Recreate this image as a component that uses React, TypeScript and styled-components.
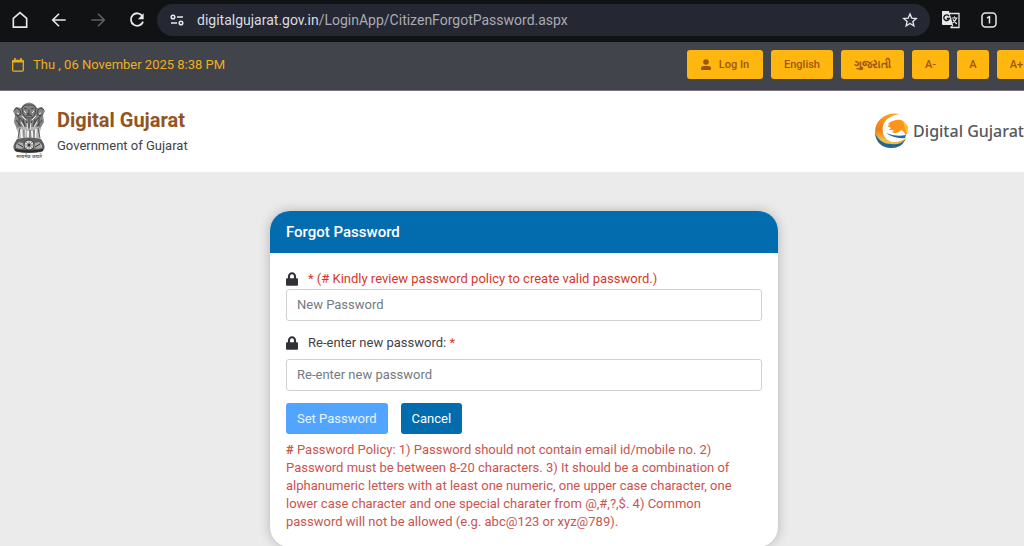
import React from "react";
import styled, { createGlobalStyle } from "styled-components";

const GlobalStyle = createGlobalStyle`
  *, *::before, *::after { box-sizing: border-box; }
  body {
    margin: 0;
    background: #ebebeb;
    color: #3f4247;
    font: 13px/18px Roboto, "Noto Sans", "Liberation Sans", sans-serif;
    overflow: hidden;
  }
  button, input { font: inherit; }
`;

const BrowserBar = styled.header`
  display: flex;
  align-items: center;
  height: 42px;
  padding: 0 23px 3px 8px;
  background: #111214;
  color: #e6e7ea;
`;

const NavGroup = styled.nav`
  display: flex;
  gap: 15px;
  margin-right: 8px;
`;

const IconButton = styled.button<{ $dim?: boolean }>`
  display: flex;
  align-items: center;
  justify-content: center;
  width: 24px;
  height: 24px;
  padding: 0;
  border: 0;
  background: none;
  color: ${(p) => (p.$dim ? "#5f6064" : "inherit")};
`;

const AddressBar = styled.div`
  display: flex;
  flex: 1;
  align-items: center;
  height: 32px;
  padding: 0 8px;
  border-radius: 16px;
  background: #252833;
`;

const AddressText = styled.div`
  flex: 1;
  margin-left: 8px;
  overflow: hidden;
  color: #a9abb4;
  font-size: 14px;
  white-space: nowrap;
`;

const Host = styled.span`
  color: #d9dbe1;
`;

const BrowserActions = styled.div`
  display: flex;
  gap: 15px;
  margin-left: 8px;
`;

const Site = styled.div`
  width: calc(100% + 24px);
`;

const TopBar = styled.div`
  display: flex;
  align-items: center;
  justify-content: space-between;
  height: 49px;
  padding: 0 12px 3px 12px;
  border-bottom: 1px solid #77787d;
  background: #42444b;
`;

const DateLine = styled.div`
  display: flex;
  align-items: center;
  gap: 9px;
  color: #efae1c;
`;

const Tools = styled.div`
  display: flex;
  gap: 8px;
`;

const ToolButton = styled.button<{ $width: number }>`
  display: flex;
  align-items: center;
  justify-content: center;
  gap: 8px;
  width: ${(p) => p.$width}px;
  height: 29px;
  padding: 0;
  border: 0;
  border-radius: 3px;
  background: #ffb70f;
  color: #9a560f;
  font-size: 11px;
  font-weight: 500;
  &:lang(gu) { font-weight: 700; }
`;

const Masthead = styled.div`
  display: flex;
  align-items: center;
  justify-content: space-between;
  height: 81px;
  padding: 0 24px 2px 12px;
  background: #fff;
`;

const Brand = styled.div`
  display: flex;
  align-items: center;
  gap: 11px;
`;

const BrandName = styled.h1`
  margin: 0 0 4px;
  color: #93551f;
  font-size: 20px;
  font-weight: 700;
  line-height: 26px;
`;

const BrandOwner = styled.p`
  margin: 0;
`;

const PortalLogo = styled.a`
  display: flex;
  align-items: center;
  gap: 4px;
  color: #55585e;
  font: 500 16px/24px "Noto Sans", sans-serif;
  text-decoration: none;
  white-space: nowrap;
`;

const Main = styled.main`
  display: flex;
  justify-content: center;
  padding: 39px 24px;
`;

const Card = styled.section`
  width: 100%;
  max-width: 508px;
  overflow: hidden;
  border-radius: 20px;
  background: #fff;
  box-shadow: 0 0 12px rgba(0, 0, 0, 0.24);
`;

const CardTitle = styled.h2`
  margin: 0;
  padding: 12px 16px;
  background: #036cae;
  color: #fff;
  font-size: 15px;
  font-weight: 500;
  line-height: 18px;
`;

const Form = styled.form`
  padding: 16px;
`;

const Label = styled.label<{ $spaced?: boolean }>`
  display: flex;
  align-items: center;
  gap: 10px;
  height: 20px;
  margin-bottom: ${(p) => (p.$spaced ? "6px" : "0")};
`;

const Required = styled.span`
  color: #d23a2b;
`;

const Field = styled.input`
  display: block;
  width: 100%;
  height: 32px;
  margin-bottom: 12px;
  padding: 0 10px 2px;
  border: 1px solid #ced2d7;
  border-radius: 3px;
  background: #fff;
  color: #3f4247;
  &::placeholder { color: #747a81; opacity: 1; }
`;

const Actions = styled.div`
  display: flex;
  gap: 13px;
  margin-bottom: 7px;
`;

const ActionButton = styled.button<{ $soft?: boolean }>`
  height: 31px;
  padding: 0 11px;
  border: 0;
  border-radius: 3px;
  background: ${(p) => (p.$soft ? "#51a4ff" : "#036cae")};
  color: ${(p) => (p.$soft ? "#e9f4ff" : "#fff")};
`;

const Policy = styled.p`
  margin: 0;
  padding-right: 16px;
  color: #c95450;
`;

const Lock = () => (
  <svg width="12" height="14" viewBox="0 0 448 512" fill="#303236" aria-hidden="true">
    <path d="M400 224h-24v-72C376 68 308 0 224 0S72 68 72 152v72H48c-27 0-48 21-48 48v192c0 27 21 48 48 48h352c27 0 48-21 48-48V272c0-27-21-48-48-48zm-104 0H152v-72c0-40 32-72 72-72s72 32 72 72v72z" />
  </svg>
);

const stroke = { fill: "none", stroke: "currentColor", strokeWidth: 2 } as const;

const Emblem = () => (
  <svg width="34" height="58" viewBox="0 0 34 58" role="img" aria-label="State Emblem of India">
    <path d="M11 3q6-5 12 0l2 3 5-1 3 4-2 4 1 7-4 7-4 2-4 3h-7l-4-3-4-2-3-7 1-7-2-4 3-4 5 1z" fill="#858585" />
    <path d="M4 26l6-1 14 0 5 1-2 7 2 6H5l2-6z" fill="#b5b5b5" />
    <g fill="none" stroke="#444" strokeWidth="1">
      <path d="M2 8l3-2 3 2 1 4-3 2-3-2M32 8l-3-2-3 2-1 4 3 2 3-2" />
      <path d="M10 6l3-3h8l3 3-1 6-3 4h-6l-3-4zM12 6l3 1M22 6l-3 1M17 7v4l-2 1h4M14 14q3-2 6 0" />
      <path d="M5 14l4 3 3 5M29 14l-4 3-3 5M4 18l5 6M30 18l-5 6M11 17l2 8M23 17l-2 8M14 19l3 8 3-8M17 17v10M7 16v8M27 16v8" />
    </g>
    <g stroke="#eee" strokeWidth="1" fill="none">
      <path d="M12 9l2 2M22 9l-2 2M5 11l2 1M29 11l-2 1M10 14l4 4M24 14l-4 4M9 20l3 5M25 20l-3 5M15 21l1 6M19 21l-1 6" />
      <path d="M9 27l1 10M13 28l-1 9M16 29v9M20 29l1 9M24 27l-1 10" strokeWidth="2" />
    </g>
    <path d="M8 26l-2 10M12 28v9M18 28v9M22 28v9M26 26l2 10" stroke="#555" strokeWidth="1" />
    <path d="M5 37q12-3 24 0l3 5q2 6-3 8-12 2-24 0-5-2-3-8z" fill="#606060" />
    <path d="M3 48q14 3 28 0" fill="none" stroke="#2c2c2c" strokeWidth="2" />
    <path d="M4 43l3-3 4 1 2 4-4 2-5-1zM30 43l-3-3-4 1-2 4 4 2 5-1z" fill="#aaa" />
    <path d="M6 42l5 3M28 42l-5 3" stroke="#333" />
    <circle cx="17" cy="43" r="5" fill="#ddd" stroke="#333" />
    <path d="M13 43h8M17 39v8M14 40l6 6M20 40l-6 6" stroke="#666" strokeWidth=".7" />
    <circle cx="17" cy="43" r="1.5" fill="#333" />
    <text x="17" y="56" textAnchor="middle" fontFamily="Noto Sans" fontSize="5" fontWeight="600" fill="#555">सत्यमेव जयते</text>
  </svg>
);

const LionMark = () => (
  <svg width="35" height="38" viewBox="0 0 35 38" aria-hidden="true">
    <defs>
      <linearGradient id="ring" x1=".6" y1="0" x2=".4" y2="1">
        <stop offset="0" stopColor="#ffa51f" />
        <stop offset=".55" stopColor="#f17c16" />
        <stop offset=".8" stopColor="#eebf43" />
      </linearGradient>
    </defs>
    <path d="M26 2C12-1 1 8 1 20c0 10 7 16 16 16 8 0 13-4 15-10-8 6-20 6-23-5C7 11 13 4 26 2z" fill="url(#ring)" />
    <path d="M1 21c1 10 8 15 16 15 7 0 12-3 14-8-4 4-9 5-14 4C8 32 4 27 1 21z" fill="#1c679b" />
    <path d="M12 21q9 4 20 2l-1 3Q20 27 12 21z" fill="#226aa0" />
    <path d="M14 12c3-3 5-3 8-4 5-1 8 1 9 4l3 3-1 7-2 1c0-3-2-4-4-5-2 3-6 4-9 2l2-2-5 0 2-2-4-2 3-1z" fill="#ff9418" />
    <path d="M29 9l4 4 1 3-1 6-2-5z" fill="#ffc02b" />
  </svg>
);

export default function App() {
  return (
    <>
      <GlobalStyle />
      <BrowserBar>
        <NavGroup aria-label="Browser">
          <IconButton aria-label="Home">
            <svg width="20" height="20" viewBox="0 0 24 24" {...stroke}><path d="M4 10v10.500h16V10l-8-7z" strokeLinejoin="miter" /></svg>
          </IconButton>
          <IconButton aria-label="Back">
            <svg width="20" height="20" viewBox="0 0 24 24" {...stroke}><path d="M20 12H5M12 4.500L4.500 12l7.500 7.500" /></svg>
          </IconButton>
          <IconButton aria-label="Forward" $dim>
            <svg width="20" height="20" viewBox="0 0 24 24" {...stroke}><path d="M4 12h15M12 4.500l7.500 7.500-7.500 7.500" /></svg>
          </IconButton>
          <IconButton aria-label="Reload">
            <svg width="20" height="20" viewBox="0 0 24 24" {...stroke}><path d="M18.500 7.300A7.500 7.500 0 1 0 19.300 14" strokeWidth="2.200" /><path d="M20 4v7h-7z" fill="currentColor" stroke="none" /></svg>
          </IconButton>
        </NavGroup>
        <AddressBar>
          <IconButton aria-label="Site information">
            <svg width="14" height="12" viewBox="0 0 14 12" fill="none" stroke="currentColor" strokeWidth="1.500"><circle cx="3" cy="3" r="1.800" /><circle cx="11" cy="9" r="1.800" /><path d="M7 3h6M1 9h6" /></svg>
          </IconButton>
          <AddressText><Host>digitalgujarat.gov.in</Host>/LoginApp/CitizenForgotPassword.aspx</AddressText>
          <IconButton aria-label="Bookmark">
            <svg width="16" height="16" viewBox="0 0 24 24" {...stroke}><path d="M12 3l2.700 6.200 6.700.600-5.100 4.400 1.500 6.600-5.800-3.500-5.800 3.500 1.500-6.600-5.100-4.400 6.700-.600z" /></svg>
          </IconButton>
        </AddressBar>
        <BrowserActions>
          <IconButton aria-label="Translate">
            <svg width="19" height="19" viewBox="0 0 19 19"><path d="M8 3.500h10v14H9.500" fill="none" stroke="currentColor" strokeWidth="1.300" /><path d="M1 1h7l4 14H2a1 1 0 0 1-1-1z" fill="currentColor" /><path d="M8 6.200A2.800 2.800 0 1 0 8.300 8.500H5.800" fill="none" stroke="#111214" strokeWidth="1.300" /><path d="M10.500 8h6M13.500 6.500V8M15.500 8q-1 3-4 5M11.800 9.500l4 4.500M12 15l-2 2.500" fill="none" stroke="currentColor" strokeWidth="1.200" /></svg>
          </IconButton>
          <IconButton aria-label="Tabs, 1 open">
            <svg width="16" height="16" viewBox="0 0 16 16" fill="none" stroke="currentColor" strokeWidth="1.500"><rect x="1" y="1" width="14" height="14" rx="3.500" /><path d="M6 6l2.500-1.300V11.500" /></svg>
          </IconButton>
        </BrowserActions>
      </BrowserBar>

      <Site>
        <TopBar>
          <DateLine>
            <svg width="12" height="14" viewBox="0 0 12 14" fill="none" stroke="currentColor" aria-hidden="true"><rect x=".700" y="2.500" width="10.600" height="10.600" rx="1" strokeWidth="1.300" /><path d="M0 3.500h12" strokeWidth="2" /><path d="M3 0v3M9 0v3" strokeWidth="1.600" /></svg>
            Thu , 06 November 2025 8:38 PM
          </DateLine>
          <Tools>
            <ToolButton $width={76}>
              <svg width="10" height="12" viewBox="0 0 10 12" fill="currentColor" aria-hidden="true"><circle cx="5" cy="3" r="2.800" /><path d="M0 11V9.500Q0 7 2.500 7h5Q10 7 10 9.500V11z" /></svg>
              Log In
            </ToolButton>
            <ToolButton $width={62}>English</ToolButton>
            <ToolButton $width={63} lang="gu">ગુજરાતી</ToolButton>
            <ToolButton $width={37}>A-</ToolButton>
            <ToolButton $width={32}>A</ToolButton>
            <ToolButton $width={39}>A+</ToolButton>
          </Tools>
        </TopBar>

        <Masthead>
          <Brand>
            <Emblem />
            <div>
              <BrandName>Digital Gujarat</BrandName>
              <BrandOwner>Government of Gujarat</BrandOwner>
            </div>
          </Brand>
          <PortalLogo href="#">
            <LionMark />
            Digital Gujarat
          </PortalLogo>
        </Masthead>

        <Main>
          <Card>
            <CardTitle>Forgot Password</CardTitle>
            <Form onSubmit={(e) => e.preventDefault()}>
              <Label htmlFor="new-password">
                <Lock />
                <Required>* (# Kindly review password policy to create valid password.)</Required>
              </Label>
              <Field id="new-password" type="password" placeholder="New Password" />
              <Label htmlFor="repeat-password" $spaced>
                <Lock />
                <span>Re-enter new password: <Required>*</Required></span>
              </Label>
              <Field id="repeat-password" type="password" placeholder="Re-enter new password" />
              <Actions>
                <ActionButton type="submit" $soft>Set Password</ActionButton>
                <ActionButton type="button">Cancel</ActionButton>
              </Actions>
              <Policy>
                <b>#</b> Password Policy: 1) Password should not contain email id/mobile no. 2) Password must be
                between 8-20 characters. 3) It should be a combination of alphanumeric letters with at least one
                numeric, one upper case character, one lower case character and one special charater from @,#,?,$.
                4) Common password will not be allowed (e.g. abc@123 or xyz@789).
              </Policy>
            </Form>
          </Card>
        </Main>
      </Site>
    </>
  );
}
